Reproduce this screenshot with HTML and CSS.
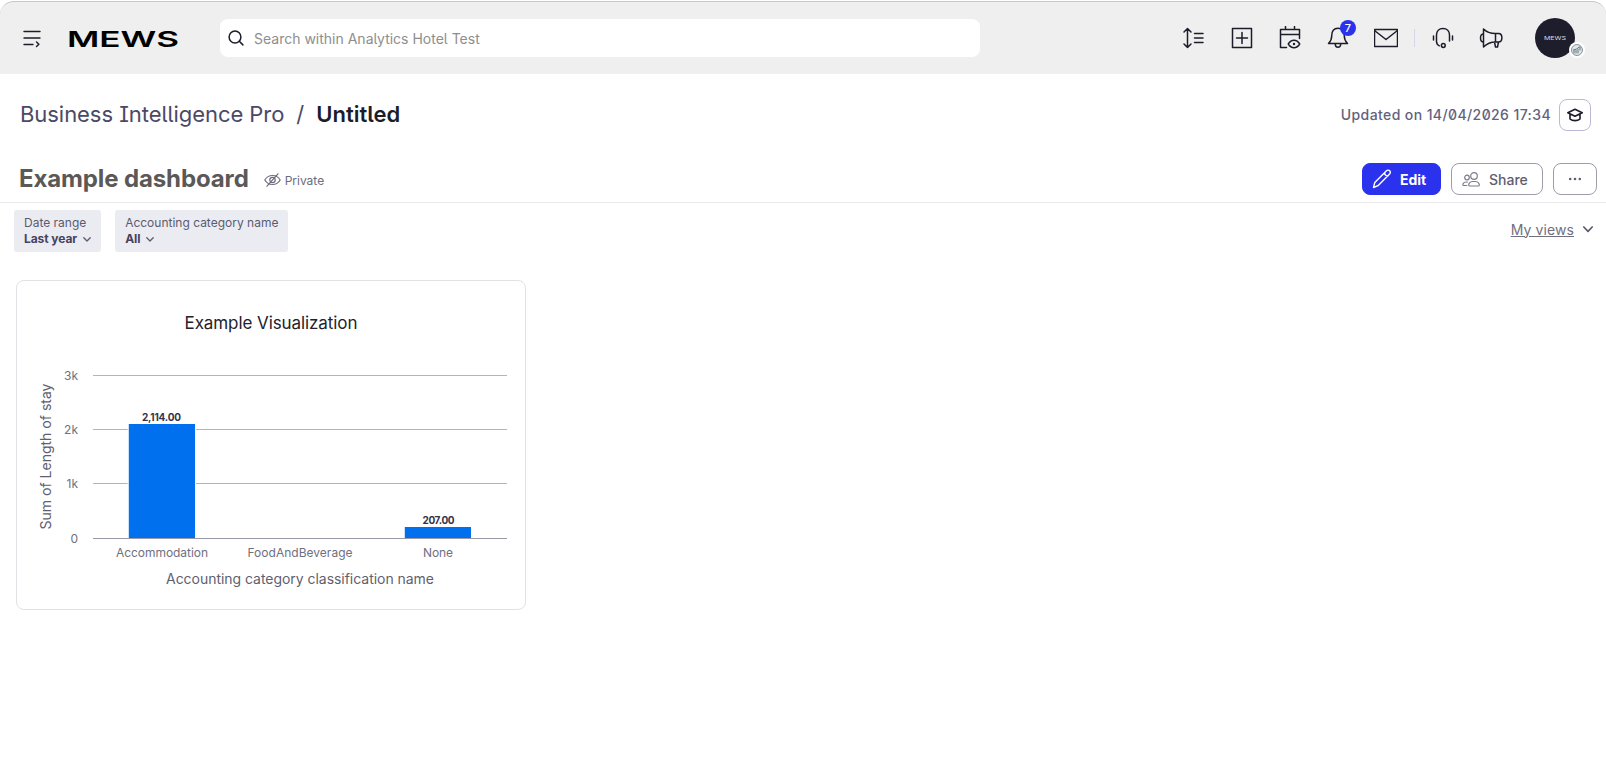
FILE: index.html
```html
<!DOCTYPE html>
<html lang="en">
<head>
  <meta charset="utf-8">
  <title>Business Intelligence Pro</title>
  <link rel="stylesheet" href="styles.css">
</head>
<body>
  <header class="topbar">
    <svg class="menu-icon" width="18" height="18" viewBox="0 0 18 18">
      <path d="M1 1.5h16M1 8h16M1 14.5h9M13.5 12l2.4 2.2-2.4 2.3"/>
    </svg>
    <svg class="logo" width="114" height="30" viewBox="0 0 114 30">
      <text x="0" y="23.500" textLength="112" lengthAdjust="spacingAndGlyphs">MEWS</text>
    </svg>
    <div class="search">
      <svg width="16" height="16" viewBox="0 0 16 16"><circle cx="7" cy="7" r="5.9"/><path d="M11.3 11.3l3.6 3.6"/></svg>
      <span class="search-text">Search within Analytics Hotel Test</span>
    </div>
    <nav class="actions">
      <svg width="24" height="24" viewBox="0 0 24 24"><path d="M5.500 2.500v19M2 6l3.500-3.500L9 6M2 18l3.500 3.500L9 18M12.500 7.500h8.500M12.500 12h8.500M12.500 16.500h8.500"/></svg>
      <svg width="24" height="24" viewBox="0 0 24 24"><path d="M2.500 2.500h19v19h-19zM6.500 12h11M12 6.500v11"/></svg>
      <svg width="24" height="24" viewBox="0 0 24 24"><path d="M8.500 21.500H2.500V3.500h19v9M2.500 8.500h19M7.500 0.500v3M16.500 0.500v3"/><path d="M10.300 18c3-5 8.400-5 11.400 0-3 5-8.400 5-11.400 0z"/><circle class="dot" cx="16" cy="18" r="1.200"/></svg>
      <div class="bell">
        <svg width="24" height="24" viewBox="0 0 24 24"><path d="M2.500 17.500c2-2 3.200-3.500 3.200-7.500 0-5 2.300-7.800 6.300-7.800s6.300 2.800 6.300 7.800c0 4 1.200 5.500 3.200 7.500zM9.200 17.800c0 4.600 5.600 4.600 5.600 0"/></svg>
        <span class="badge">7</span>
      </div>
      <svg width="24" height="24" viewBox="0 0 24 24"><path d="M.5 3.500h23v17H.5zM.5 4.500L12 13.500 23.500 4.500"/></svg>
      <span class="separator"></span>
      <svg width="24" height="24" viewBox="0 0 24 24"><path d="M8.300 19.800c-1.600-.8-2.800-2-2.800-4.300V9c0-4 2.600-6.500 6.500-6.500s6.500 2.500 6.500 6.500v6M2.500 10v4M21.500 10v4"/><circle cx="12.300" cy="19.500" r="1.900"/></svg>
      <svg width="24" height="24" viewBox="0 0 24 24"><path d="M4.500 3v18M4.500 3c3.500 3.600 6.500 4.500 12 4.500h3c4.500 0 4.500 8.500 0 8.500h-3c-5.500 0-8.500 1.500-12 5M4.500 8c-4 0-4 8 0 8M16.500 7.500V16M15.500 16l1 5h2l1-5"/></svg>
    </nav>
    <div class="avatar">
      <svg width="26" height="10" viewBox="0 0 26 10"><text x="2" y="7" textLength="22" lengthAdjust="spacingAndGlyphs">MEWS</text></svg>
      <svg class="avatar-mark" width="16" height="16" viewBox="0 0 16 16"><circle class="rim" cx="8" cy="8" r="8"/><circle class="disc" cx="8" cy="8" r="5.500"/><path d="M5 11V8.500M7 11V8.500M9 11V7.500M11 8V5M4.500 8l3-1 3-2"/></svg>
    </div>
  </header>

  <div class="page-head">
    <div class="breadcrumb">
      <span class="crumb">Business Intelligence Pro</span>
      <span class="slash">/</span>
      <span class="current">Untitled</span>
    </div>
    <div class="updated">
      <span class="date">Updated on 14/04/2026 17:34</span>
      <button class="learn">
        <svg width="16" height="14" viewBox="0 0 16 14"><path d="M.8 4.800L8 1.300l7.200 3.500L8 8.300zM3 6v5c2.500 2.200 7.500 2.200 10 0V6"/></svg>
      </button>
    </div>
  </div>

  <div class="dash-head">
    <h1>Example dashboard</h1>
    <div class="private">
      <svg width="17" height="14" viewBox="0 0 17 14"><path d="M.8 7c3.500-6 11.900-6 15.400 0-3.500 6-11.900 6-15.400 0zM14 .8L3 13.200"/><circle cx="8.500" cy="7" r="2.700"/></svg>
      <span>Private</span>
    </div>
    <div class="buttons">
      <button class="btn edit">
        <svg width="20" height="20" viewBox="0 0 20 20"><path d="M1.500 18.500l1.300-5L14.500 1.800c1-1 2.400-.9 3.200 0s.8 2.200-.1 3.100L6 16.700zM12.500 3.800c.2 2 1.400 3.200 3.300 3.300"/></svg>
        <span>Edit</span>
      </button>
      <button class="btn share">
        <svg width="19" height="15" viewBox="0 0 19 15"><circle cx="12" cy="4" r="3.300"/><path d="M7.500 14c-1.500 0-1-4.500 3-4.500h3c4 0 4.500 4.500 3 4.500zM4.800 13.500H1.500c-1.200 0-.8-3.500 2.800-3.500h1.200"/><circle cx="5" cy="5.500" r="2.300"/></svg>
        <span>Share</span>
      </button>
      <button class="btn more">
        <svg width="14" height="4" viewBox="0 0 14 4"><circle cx="2.200" cy="2" r="1.300"/><circle cx="7" cy="2" r="1.300"/><circle cx="11.800" cy="2" r="1.300"/></svg>
      </button>
    </div>
  </div>

  <div class="filters">
    <div class="filter">
      <div>Date range</div>
      <div class="value">Last year <svg width="8" height="5" viewBox="0 0 8 5"><path d="M.8.8L4 4 7.200.8"/></svg></div>
    </div>
    <div class="filter">
      <div>Accounting category name</div>
      <div class="value">All <svg width="8" height="5" viewBox="0 0 8 5"><path d="M.8.8L4 4 7.200.8"/></svg></div>
    </div>
    <div class="views">
      <a href="#">My views</a>
      <svg width="10" height="7" viewBox="0 0 10 7"><path d="M.8 1L5 5.300 9.200 1"/></svg>
    </div>
  </div>

  <div class="card">
    <svg class="chart" width="508" height="328" viewBox="17 281 508 328">
      <text class="title" x="271" y="329" textLength="173">Example Visualization</text>

      <path class="grid" d="M93 375.500h414M93 429.500h414M93 483.500h414"/>
      <rect class="bar" x="128.500" y="423.500" width="67" height="115"/>
      <rect class="bar" x="404.500" y="526.500" width="67" height="12"/>
      <path class="axis" d="M93 538.500h414"/>

      <text class="tick y" x="78" y="380">3k</text>
      <text class="tick y" x="78" y="434">2k</text>
      <text class="tick y" x="78" y="488">1k</text>
      <text class="tick y" x="78" y="543">0</text>

      <text class="amount" x="161.500" y="421" textLength="39">2,114.00</text>
      <text class="amount" x="438.500" y="524" textLength="32">207.00</text>

      <text class="tick" x="162" y="557" textLength="92">Accommodation</text>
      <text class="tick" x="300" y="557" textLength="105">FoodAndBeverage</text>
      <text class="tick" x="438" y="557" textLength="30">None</text>

      <text class="label" x="300" y="584" textLength="268">Accounting category classification name</text>
      <text class="label" transform="translate(51 456.500) rotate(-90)" textLength="146">Sum of Length of stay</text>
    </svg>
  </div>
</body>
</html>
```
FILE: styles.css
```css
body {
  margin: 0;
  padding-top: 1px;
  background: #fff;
  font-family: Inter, "Liberation Sans", sans-serif;
  color: #5b5b6e;
  min-height: 777px;
}
svg {
  fill: none;
  flex: none;
  stroke-linecap: round;
  stroke-linejoin: round;
}
button {
  display: flex;
  align-items: center;
  font-family: inherit;
  box-sizing: border-box;
  background: #fff;
  padding: 0;
}

/* top bar */
.topbar {
  display: flex;
  align-items: center;
  height: 73px;
  box-sizing: border-box;
  padding: 0 31px 0 23px;
  background: #efefef;
  border-top: 1px solid #c6c8c8;
  border-radius: 14px 14px 0 0;
  font-feature-settings: "ss02";
}
.menu-icon {
  stroke: #1c1c2b;
  stroke-width: 1.4;
  margin-top: 2px;
}
.logo {
  margin-left: 26px;
}
.logo text {
  fill: #000;
  font-size: 22px;
  font-weight: 600;
}
.search {
  display: flex;
  align-items: center;
  gap: 10px;
  width: 760px;
  height: 38px;
  box-sizing: border-box;
  padding-left: 8px;
  margin-left: 39px;
  background: #fff;
  border-radius: 8px;
}
.search svg {
  stroke: #1c1c2b;
  stroke-width: 1.5;
}
.search-text {
  font-size: 14px;
  color: #8e8e8e;
}
.actions {
  display: flex;
  align-items: center;
  gap: 24px;
  margin-left: 202px;
}
.actions svg {
  display: block;
  stroke: #1c1c2b;
  stroke-width: 1.5;
}
.actions .dot {
  fill: #1c1c2b;
  stroke: none;
}
.bell {
  position: relative;
}
.badge {
  position: absolute;
  left: 14px;
  top: -6px;
  width: 16px;
  height: 16px;
  border-radius: 50%;
  background: #2b32ee;
  color: #fff;
  font-size: 11px;
  font-weight: 500;
  line-height: 16px;
  text-align: center;
}
.separator {
  width: 1px;
  height: 18px;
  margin: 0 -8px;
  background: #d5d5e6;
}
.avatar {
  position: relative;
  display: flex;
  align-items: center;
  justify-content: center;
  width: 40px;
  height: 40px;
  margin-left: auto;
  border-radius: 50%;
  background: #1e1d2c;
}
.avatar text {
  fill: #ddd;
  font-size: 5px;
}
.avatar-mark {
  position: absolute;
  left: 34px;
  top: 24px;
}
.avatar-mark .rim {
  fill: #fff;
}
.avatar-mark .disc {
  fill: #dfe5e9;
  stroke: #8794a0;
}
.avatar-mark path {
  stroke: #65727e;
}

/* breadcrumb row */
.page-head {
  display: flex;
  align-items: center;
  justify-content: space-between;
  height: 82px;
  padding: 0 15px 0 20px;
  font-feature-settings: "ss02";
}
.breadcrumb {
  display: flex;
  padding-bottom: 2px;
  font-size: 22px;
  color: #4b4965;
}
.crumb {
  letter-spacing: -0.05px;
}
.slash {
  margin: 0 12px;
}
.current {
  font-weight: 600;
  color: #1c1c2b;
}
.updated {
  display: flex;
  align-items: center;
  gap: 8px;
  font-size: 14px;
  font-weight: 500;
  color: #63617e;
}
.date {
  letter-spacing: 0.4px;
  padding-bottom: 1px;
}
.learn {
  justify-content: center;
  width: 32px;
  height: 32px;
  border: 1px solid #bdb9d4;
  border-radius: 8px;
}
.learn svg {
  stroke: #1c1c2b;
  stroke-width: 1.6;
}

/* dashboard title row */
.dash-head {
  display: flex;
  align-items: center;
  height: 46px;
  padding: 0 9px 0 19px;
  border-bottom: 1px solid #ececf0;
}
h1 {
  margin: 0;
  padding-bottom: 2px;
  font-size: 24px;
  font-weight: 700;
  letter-spacing: -0.12px;
  color: #5b5856;
}
.private {
  display: flex;
  align-items: center;
  gap: 4px;
  margin-left: 15px;
  padding-top: 2px;
  font-size: 12px;
  color: #6c6c7d;
}
.private svg {
  stroke: #6c6c7d;
  stroke-width: 1.2;
}
.buttons {
  display: flex;
  gap: 10px;
  margin-left: auto;
}
.btn {
  height: 32px;
  border: 1px solid #9d9caa;
  border-radius: 8px;
  font-size: 14px;
  color: #5f5e70;
}
.edit {
  width: 79px;
  gap: 8px;
  padding-left: 9px;
  background: #2b32ee;
  border-color: #2b32ee;
  color: #fff;
  font-weight: 700;
}
.edit svg {
  stroke: #fff;
  stroke-width: 1.4;
}
.share {
  width: 92px;
  gap: 8px;
  padding-left: 10px;
  font-weight: 500;
}
.share svg {
  stroke: #7d7c8b;
  stroke-width: 1.2;
}
.more {
  width: 44px;
  justify-content: center;
}
.more svg {
  fill: #5f5e70;
}

/* filters */
.filters {
  display: flex;
  padding: 7px 9px 0 14px;
  gap: 14px;
}
.filter {
  height: 42px;
  box-sizing: border-box;
  padding: 5px 10px 0;
  background: #ebebf2;
  border-radius: 3px;
  font-size: 12px;
  line-height: 16px;
  color: #5b5b6e;
}
.value {
  display: flex;
  align-items: center;
  gap: 6px;
  font-weight: 700;
  letter-spacing: -0.08px;
  color: #45435f;
}
.value svg, .views svg {
  stroke: #5b5b6e;
  stroke-width: 1.3;
}
.views {
  display: flex;
  align-items: center;
  gap: 9px;
  height: 38px;
  margin-left: auto;
  padding-right: 4px;
}
.views a {
  font-size: 14px;
  letter-spacing: 0.1px;
  color: #706f80;
}
.views svg {
  stroke-width: 1.7;
}

/* chart */
.card {
  width: 508px;
  height: 328px;
  margin: 28px 0 0 16px;
  border: 1px solid #e2e2e6;
  border-radius: 8px;
}
.chart {
  display: block;
}
.chart text {
  text-anchor: middle;
}
.title {
  font-size: 17px;
  fill: #22222e;
}
.grid, .axis {
  shape-rendering: crispEdges;
  stroke-linecap: butt;
}
.grid {
  stroke: #b3b3bb;
}
.axis {
  stroke: #9a9aa6;
}
.bar {
  fill: #0070ee;
  stroke: #fff;
}
.tick {
  font-size: 12px;
  fill: #6f6f80;
}
.chart .y {
  text-anchor: end;
}
.amount {
  font-size: 10px;
  font-weight: 700;
  fill: #33334a;
}
.label {
  font-size: 14px;
  fill: #5f5f70;
}
```
